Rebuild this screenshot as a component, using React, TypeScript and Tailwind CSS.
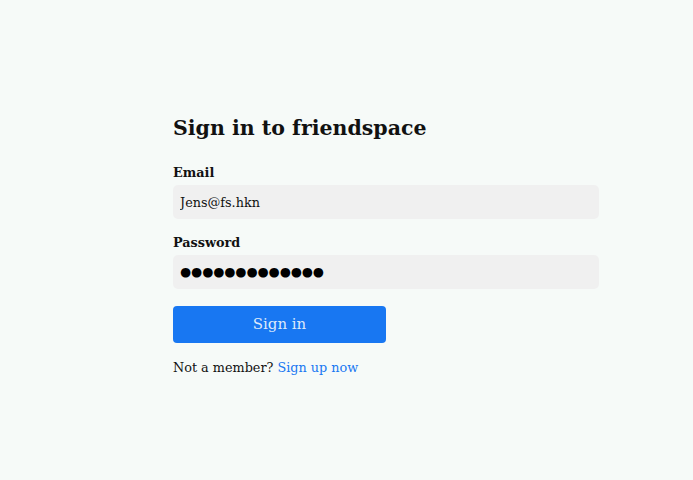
import React from "react";

const App: React.FC = () => {
  return (
    <div className="min-h-screen bg-[#f6faf8] font-['DejaVu_Serif',serif] text-[#111]">
      <div className="pt-[115px] pl-[173px]">
        <form className="w-[426px]" onSubmit={(e) => e.preventDefault()}>
          <h1 className="text-[20.5px] font-bold leading-[26px] mb-[24px]">Sign in to friendspace</h1>

          <label className="block text-[12.8px] font-bold leading-[16px] mb-[4px]">Email</label>
          <input
            type="email"
            defaultValue="Jens@fs.hkn"
            className="block w-full h-[34px] rounded-[5px] bg-[#f0f0f0] px-[7px] text-[12.8px] outline-none"
          />

          <label className="block mt-[16px] text-[12.8px] font-bold leading-[16px] mb-[4px]">Password</label>
          <div className="flex items-center w-full h-[34px] rounded-[5px] bg-[#f0f0f0] px-[7px] font-['DejaVu_Sans',sans-serif] text-[12.7px] text-black leading-none">
            ●●●●●●●●●●●●●
          </div>

          <button
            type="submit"
            className="block mt-[17px] w-[213px] h-[37px] rounded-[4px] bg-[#1877f2] text-[15px] text-[#dde9fb]"
          >
            Sign in
          </button>

          <p className="mt-[17px] text-[12.8px] leading-[16px]">
            Not a member? <a href="#" className="text-[#1877f2]">Sign up now</a>
          </p>
        </form>
      </div>
    </div>
  );
};

export default App;
